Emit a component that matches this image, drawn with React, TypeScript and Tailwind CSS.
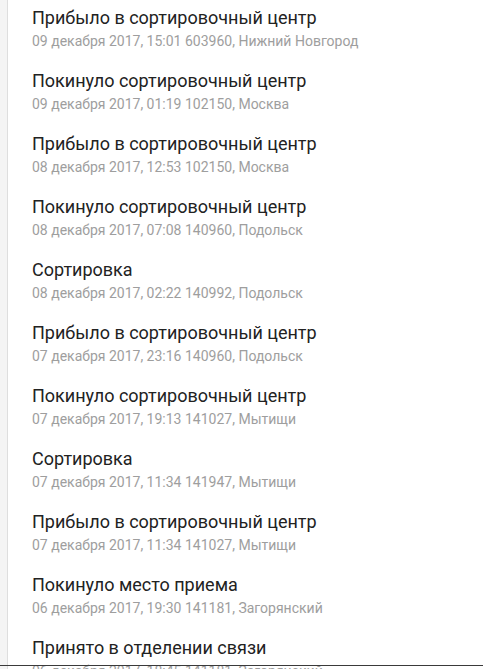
import React from 'react';

type Event = {
  title: string;
  date: string;
  place: string;
};

const events: Event[] = [
  { title: 'Прибыло в сортировочный центр', date: '09 декабря 2017, 15:01', place: '603960, Нижний Новгород' },
  { title: 'Покинуло сортировочный центр', date: '09 декабря 2017, 01:19', place: '102150, Москва' },
  { title: 'Прибыло в сортировочный центр', date: '08 декабря 2017, 12:53', place: '102150, Москва' },
  { title: 'Покинуло сортировочный центр', date: '08 декабря 2017, 07:08', place: '140960, Подольск' },
  { title: 'Сортировка', date: '08 декабря 2017, 02:22', place: '140992, Подольск' },
  { title: 'Прибыло в сортировочный центр', date: '07 декабря 2017, 23:16', place: '140960, Подольск' },
  { title: 'Покинуло сортировочный центр', date: '07 декабря 2017, 19:13', place: '141027, Мытищи' },
  { title: 'Сортировка', date: '07 декабря 2017, 11:34', place: '141947, Мытищи' },
  { title: 'Прибыло в сортировочный центр', date: '07 декабря 2017, 11:34', place: '141027, Мытищи' },
  { title: 'Покинуло место приема', date: '06 декабря 2017, 19:30', place: '141181, Загорянский' },
  { title: 'Принято в отделении связи', date: '06 декабря 2017, 18:45', place: '141181, Загорянский' },
];

export default function App() {
  return (
    <div className="relative flex h-[669px] w-[483px] overflow-hidden bg-white font-['Roboto',sans-serif]">
      <div className="w-[8px] shrink-0 border-r border-[#dedede] bg-[#f4f4f4]" />
      <ul className="flex flex-col gap-[18px] pl-[24px] pt-[6px]">
        {events.map((e, i) => (
          <li key={i}>
            <p className="text-[18px] leading-[24px] text-[#222]">{e.title}</p>
            <p className="mt-[2px] text-[14px] leading-[19px] text-[#9e9e9e]">
              {e.date} {e.place}
            </p>
          </li>
        ))}
      </ul>
      <div className="absolute left-0 right-0 top-[665px] h-px bg-[#3a3a3a]" />
    </div>
  );
}
